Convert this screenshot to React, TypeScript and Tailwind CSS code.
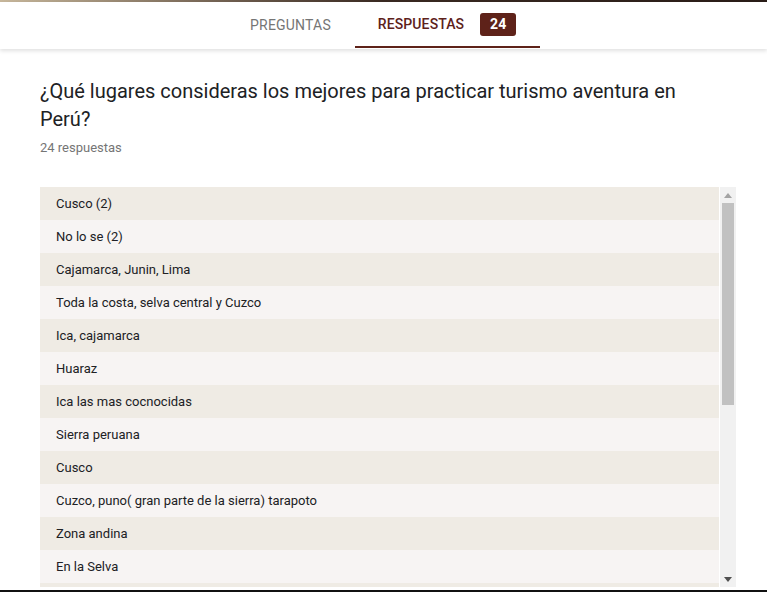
import React from "react";

const respuestas = [
  "Cusco (2)",
  "No lo se (2)",
  "Cajamarca, Junin, Lima",
  "Toda la costa, selva central y Cuzco",
  "Ica, cajamarca",
  "Huaraz",
  "Ica las mas cocnocidas",
  "Sierra peruana",
  "Cusco",
  "Cuzco, puno( gran parte de la sierra) tarapoto",
  "Zona andina",
  "En la Selva",
  "Arequipa",
  "Tarapoto",
];

export default function App() {
  return (
    <main
      className="w-[767px] h-[592px] bg-white overflow-hidden flex flex-col"
      style={{ fontFamily: "Roboto, 'Liberation Sans', sans-serif" }}
    >
      {/* TOP STRIP */}
      <div className="h-[2px] bg-gradient-to-r from-[#c8b89c] via-[#3a2a22] to-[#2a1d18]" />

      {/* TABS */}
      <div className="h-[47px] bg-white shadow-[0_2px_4px_rgba(0,0,0,0.12)] flex justify-center relative z-10">
        <div className="flex h-full pr-[1px]">
          <div className="w-[128px] flex items-center justify-center text-[14px] font-normal text-[#757575] tracking-[0.2px]">
            PREGUNTAS
          </div>
          <div className="w-[185px] flex flex-col">
            <div className="flex-1 flex items-center justify-center gap-4">
              <span className="text-[14px] font-medium text-[#5d221b] tracking-[0.1px]">RESPUESTAS</span>
              <span className="w-[36px] h-[23px] rounded-[3px] bg-[#5e2219] text-white text-[14px] font-bold flex items-center justify-center">
                24
              </span>
            </div>
            <div className="h-[2px] bg-[#5e2219] mb-[1px]" />
          </div>
        </div>
      </div>

      {/* QUESTION */}
      <div className="px-10 pt-[28px]">
        <h1 className="text-[20px] leading-[28px] text-[#202124] font-normal w-[660px]">
          ¿Qué lugares consideras los mejores para practicar turismo aventura en Perú?
        </h1>
        <p className="text-[13px] text-[#757575] mt-[7px] leading-[16px]">24 respuestas</p>
      </div>

      {/* LIST */}
      <div className="ml-10 w-[696px] mt-[31px] h-[400px] flex overflow-hidden">
        <div className="flex-1 overflow-hidden">
          {respuestas.map((r, i) => (
            <div
              key={i}
              className={
                (i % 2 === 0 ? "bg-[#efebe4]" : "bg-[#f7f4f3]") +
                " h-[33px] flex items-center pl-4 text-[13px] text-[#202124]"
              }
            >
              {r}
            </div>
          ))}
        </div>

        {/* SCROLLBAR */}
        <div className="w-[16px] ml-[1px] bg-[#f1f1f1] flex flex-col">
          <div className="h-[16px] flex items-center justify-center">
            <svg width="8" height="5" viewBox="0 0 8 5">
              <polygon points="4,0 8,5 0,5" fill="#a3a3a3" />
            </svg>
          </div>
          <div className="h-[202px] mx-[2px] bg-[#c1c1c1]" />
          <div className="flex-1" />
          <div className="h-[16px] flex items-center justify-center">
            <svg width="8" height="5" viewBox="0 0 8 5">
              <polygon points="0,0 8,0 4,5" fill="#505050" />
            </svg>
          </div>
        </div>
      </div>

      <div className="flex-1" />
      <div className="h-[2px] bg-[#111]" />
    </main>
  );
}
